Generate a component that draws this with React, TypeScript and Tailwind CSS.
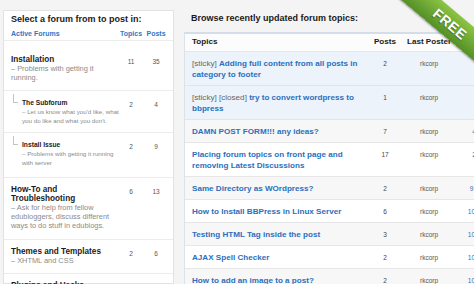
import React from 'react'

type Forum = {
  name: string
  desc: string
  topics: number
  posts: number
  sub?: boolean
  pb: string
}

const forums: Forum[] = [
  { name: 'Installation', desc: '– Problems with getting it running.', topics: 11, posts: 35, pb: 'pb-[8px]' },
  { name: 'The Subforum', desc: "– Let us know what you'd like, what you do like and what you don't.", topics: 2, posts: 4, sub: true, pb: 'pb-[6.5px]' },
  { name: 'Install Issue', desc: '– Problems with getting it running with server', topics: 2, posts: 9, sub: true, pb: 'pb-[9.5px]' },
  { name: 'How-To and Troubleshooting', desc: '– Ask for help from fellow edubloggers, discuss different ways to do stuff in edublogs.', topics: 6, posts: 13, pb: 'pb-[9px]' },
  { name: 'Themes and Templates', desc: '– XHTML and CSS', topics: 2, posts: 6, pb: 'pb-[8px]' },
  { name: 'Plugins and Hacks', desc: '– Extend your blog with plugins.', topics: 4, posts: 8, pb: 'pb-[8px]' },
]

type Topic = {
  prefix?: string
  title: string
  posts: number
  poster: string
  fresh: string
  sticky?: boolean
}

const topics: Topic[] = [
  { prefix: '[sticky]', title: 'Adding full content from all posts in category to footer', posts: 2, poster: 'rkcorp', fresh: '1 day', sticky: true },
  { prefix: '[sticky] [closed]', title: 'try to convert wordpress to bbpress', posts: 1, poster: 'rkcorp', fresh: '1 year', sticky: true },
  { title: 'DAMN POST FORM!!! any ideas?', posts: 7, poster: 'rkcorp', fresh: '4 years' },
  { title: 'Placing forum topics on front page and removing Latest Discussions', posts: 17, poster: 'rkcorp', fresh: '2 years' },
  { title: 'Same Directory as WOrdpress?', posts: 2, poster: 'rkcorp', fresh: '9 months' },
  { title: 'How to Install BBPress in Linux Server', posts: 6, poster: 'rkcorp', fresh: '10 months' },
  { title: 'Testing HTML Tag inside the post', posts: 3, poster: 'rkcorp', fresh: '10 months' },
  { title: 'AJAX Spell Checker', posts: 2, poster: 'rkcorp', fresh: '10 months' },
  { title: 'How to add an image to a post?', posts: 2, poster: 'rkcorp', fresh: '10 months' },
]

const ForumList = () => {
  return (
    <div className="w-[171px] shrink-0 mt-[10px] bg-white border border-[#e2e2e2]">
      <div className="pl-[7px] pr-[5px] pt-[3px] pb-[2px]">
        <div className="text-[9px] leading-[11px] font-bold text-[#1a1a1a]">Select a forum from to post in:</div>
        <div className="flex mt-[4px] text-[7px] leading-[9px] font-bold text-[#2f78c4]">
          <div className="w-[109px]">Active Forums</div>
          <div className="w-[22px] text-center">Topics</div>
          <div className="w-[24px] ml-[2px] text-center">Posts</div>
        </div>
      </div>
      {forums.map((f, i) => (
        <div
          key={i}
          className={`flex border-t border-[#ececec] pl-[7px] pr-[5px] ${i === 0 ? 'pt-[13.5px]' : 'pt-[6.5px]'} ${f.pb}`}
        >
          <div className="w-[109px] flex">
            {f.sub && (
              <div className="w-[11px] shrink-0">
                <div className="ml-[2px] -mt-[4px] w-[5px] h-[9px] border-l border-b border-[#c4c4c4]" />
              </div>
            )}
            <div className="min-w-0">
              <div className={`font-bold text-[#1c1c1c] leading-[9px] ${f.sub ? 'text-[6.7px]' : 'text-[8.2px]'}`}>{f.name}</div>
              <div className={`text-[#8a8a8a] ${f.sub ? 'text-[6.2px] leading-[9.5px]' : 'text-[7.4px] leading-[9.3px]'}`}>{f.desc}</div>
            </div>
          </div>
          <div className="w-[22px] text-center text-[6.5px] leading-[10px] mt-[2px] text-[#555]">{f.topics}</div>
          <div className="w-[24px] ml-[2px] text-center text-[6.5px] leading-[10px] mt-[2px] text-[#555]">{f.posts}</div>
        </div>
      ))}
    </div>
  )
}

const TopicTable = () => {
  return (
    <div className="shrink-0 w-[324px] pt-[13px]">
      <div className="pl-[7px] text-[9px] leading-[11px] font-bold text-[#1a1a1a]">Browse recently updated forum topics:</div>
      <div className="mt-[8px] border-l border-[#dbe3ea]">
        <div className="grid grid-cols-[184px_32px_56px_52px] h-[20px] items-center border-t-2 border-b border-t-[#d3dee8] border-b-[#e3e8ed] bg-[#fcfcfc] text-[8.1px] font-bold text-[#1a1a1a]">
          <div className="pl-[7px]">Topics</div>
          <div className="text-center">Posts</div>
          <div className="text-center whitespace-nowrap">Last Poster</div>
          <div className="text-center">Freshness</div>
        </div>
        {topics.map((t, i) => (
          <div
            key={i}
            className={`grid grid-cols-[184px_32px_56px_52px] border-b ${
              t.sticky ? 'bg-[#ecf3fa] border-[#dde6ee]' : i % 2 === 0 ? 'bg-[#f7f7f7] border-[#e6e6e6]' : 'bg-white border-[#e6e6e6]'
            }`}
          >
            <div className="pl-[7px] py-[5.5px] text-[8.1px] leading-[11px]">
              {t.prefix && <span className="text-[#666]">{t.prefix} </span>}
              <span className="font-bold text-[#2a70bd]">{t.title}</span>
            </div>
            <div className="py-[5.5px] text-center text-[6.5px] leading-[11px] text-[#444]">{t.posts}</div>
            <div className="py-[5.5px] text-center text-[6.5px] leading-[11px] text-[#555]">{t.poster}</div>
            <div className="py-[5.5px] text-center text-[6.5px] leading-[11px] text-[#2a70bd] whitespace-nowrap">{t.fresh}</div>
          </div>
        ))}
      </div>
    </div>
  )
}

export default function App() {
  return (
    <div
      className="relative w-[474px] h-[284px] overflow-hidden bg-[#f4f4f4] flex gap-[10px] pl-[3px]"
      style={{ fontFamily: '"Liberation Sans", Arial, sans-serif' }}
    >
      <ForumList />
      <TopicTable />
      <div className="absolute left-[377px] top-[11px] w-[146px] h-[26px] rotate-[40deg] bg-gradient-to-b from-[#8cc545] to-[#548f27] shadow-[0_1px_2px_rgba(0,0,0,0.35)] flex items-center justify-center">
        <span className="text-white font-bold text-[14px] tracking-[0.5px] [text-shadow:0_1px_1px_rgba(0,0,0,0.35)]">FREE</span>
      </div>
    </div>
  )
}
